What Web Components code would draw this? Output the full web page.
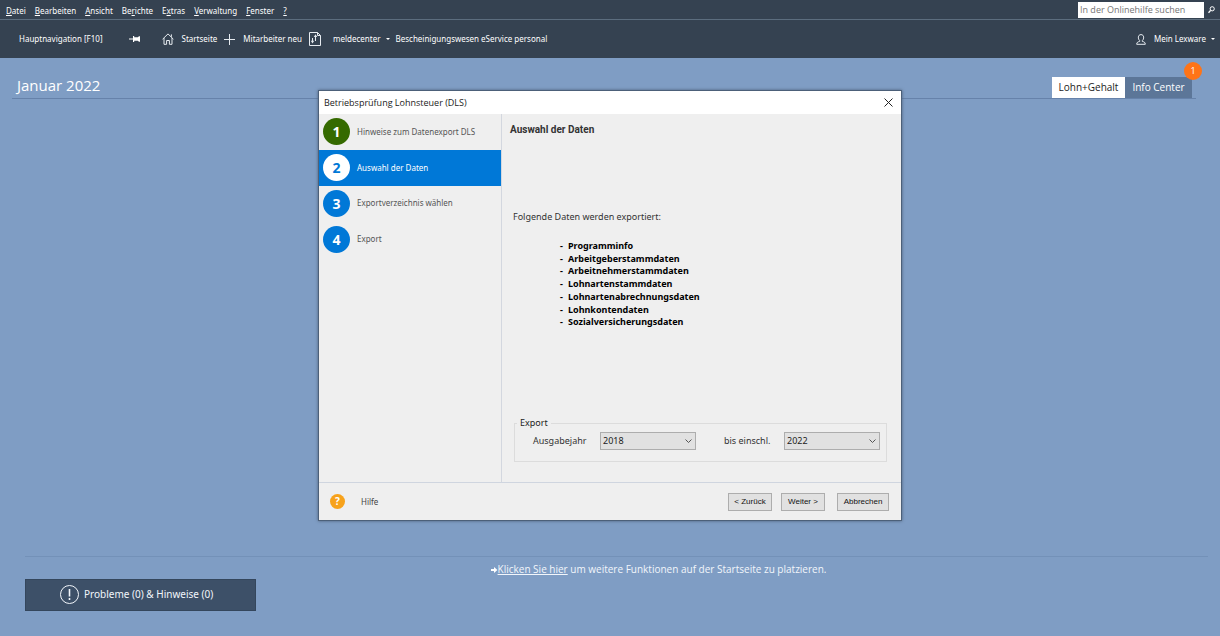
<!DOCTYPE html>
<html lang="de">
<head>
<meta charset="utf-8">
<title>Lohn und Gehalt</title>
<style>
html, body { margin: 0; height: 100%; }
body { font: 8px/12px "Noto Sans", "Open Sans", sans-serif; background: #7f9dc4; }
</style>
</head>
<body>
<payroll-app></payroll-app>

<template id="t-app">
<style>
:host { display: flex; flex-direction: column; min-height: 100%; position: relative; color: #fff; }
main { flex: 1; display: flex; flex-direction: column; }
footer { margin-top: auto; padding: 0 12px 25px 25px; }
.hint { border-top: 1px solid #7391b8; padding: 6px 0 0 84px; margin: 0 0 3px; height: 13px; display: flex; justify-content: center; align-items: center; font: 10px/13px "Open Sans", sans-serif; color: #f2f6fb; white-space: pre; }
.hint a { color: inherit; text-underline-offset: 1px; }
.status { font: 10px/12px "Noto Sans", sans-serif; color: #f2f6fb; background: #3d5068; border: 1px solid #34465c; width: 231px; height: 32px; display: flex; align-items: center; padding: 0 0 2px 33px; gap: 4px; }
</style>
<app-menubar></app-menubar>
<app-toolbar></app-toolbar>
<main>
  <page-header></page-header>
  <footer>
    <p class="hint"><svg width="7" height="6" viewBox="0 0 7 6"><path d="M0 2h3V0l3.400 3L3 6V4H0z" fill="#fff"/></svg><a href="#">Klicken Sie hier</a> um weitere Funktionen auf der Startseite zu platzieren.</p>
    <button class="status"><svg width="21" height="21" viewBox="0 0 21 21" fill="none" stroke="#f2f6fb"><circle cx="10.500" cy="10.500" r="9"/><path d="M10.500 5v7.500M10.500 14v2" stroke-width="1.600"/></svg>Probleme (0) &amp; Hinweise (0)</button>
  </footer>
</main>
<export-dialog></export-dialog>
</template>

<template id="t-menubar">
<style>
:host { display: flex; align-items: center; height: 19px; background: #354251; border-bottom: 1px solid #5c6d7e; padding: 0 5px 0 6px; }
nav { display: flex; gap: 9px; padding-top: 2px; }
a { color: #fff; text-decoration: none; }
u { text-underline-offset: 1px; }
form { margin: 0 0 0 auto; display: flex; align-items: center; gap: 4px; }
input { box-sizing: border-box; width: 126px; height: 16px; border: 0; border-radius: 0; padding: 0 2px; background: #fff; color: #333; font: 9px/14px "Open Sans", sans-serif; }
input::placeholder { color: #757575; opacity: 1; }
button { display: flex; border: 0; padding: 0; background: none; }
</style>
<nav>
<a href="#"><u>D</u>atei</a><a href="#"><u>B</u>earbeiten</a><a href="#"><u>A</u>nsicht</a><a href="#">Be<u>r</u>ichte</a><a href="#">E<u>x</u>tras</a><a href="#"><u>V</u>erwaltung</a><a href="#"><u>F</u>enster</a><a href="#"><u>?</u></a>
</nav>
<form>
<input type="text" placeholder="In der Onlinehilfe suchen" aria-label="Onlinehilfe">
<button type="button" aria-label="Suchen"><svg width="7" height="8" viewBox="0 0 7 8" fill="none" stroke="#fff"><circle cx="4.200" cy="2.800" r="2.100"/><path d="M2.600 4.400L.5 6.800" stroke-width="1.400"/></svg></button>
</form>
</template>

<template id="t-toolbar">
<style>
:host { display: flex; align-items: center; height: 38px; background: #354251; padding: 0 5px 0 19px; white-space: nowrap; }
a, button { display: flex; align-items: center; color: #fff; text-decoration: none; font: inherit; background: none; border: 0; padding: 0; }
.pin { margin: 0 22px 0 26px; }
.home { margin-right: 7px; }
.new { margin-right: 7px; }
.report { margin-right: 6px; }
.home svg, .new svg, .account svg { margin-right: 8px; }
.report svg { margin-right: 12px; }
.drop::after { content: ""; border: 2px solid transparent; border-top-color: #fff; border-bottom: 0; margin-left: 5px; }
.cert { margin-right: 2px; }
.account { margin-left: auto; }
</style>
<a href="#">Hauptnavigation [F10]</a>
<button class="pin" aria-label="Anheften"><svg width="11" height="6" viewBox="0 0 11 6" fill="#fff"><path d="M0 2.500h4v1H0zM4 0h1.200v1.200h3.600L10 .3h1v5.400h-1l-1.200-.9H5.200V6H4z"/></svg></button>
<a class="home" href="#"><svg width="12" height="12" viewBox="0 0 12 12" fill="none" stroke="#e6ebf0"><path d="M.6 6.200L6 .9l5.400 5.300M2 5v6.300h2.600V7.500h2.800v3.800H10V5M9.400 3.800V1.400"/></svg>Startseite</a>
<a class="new" href="#"><svg width="11" height="11" viewBox="0 0 11 11" stroke="#e6ebf0"><path d="M5.500 0v11M0 5.500h11"/></svg>Mitarbeiter neu</a>
<a class="report drop" href="#"><svg width="12" height="14" viewBox="0 0 12 14" fill="none" stroke="#e6ebf0"><path d="M.5.5h8l3 3v10H.5zM8.500.5v3h3"/><path d="M3.500 10V6M6.500 4v5" /><path d="M1.800 8.800h3.400L3.500 11.500zM4.800 5h3.400L6.500 2.300z" fill="#e6ebf0" stroke="none"/></svg>meldecenter</a>
<a class="cert" href="#">Bescheinigungswesen</a>
<a href="#">eService personal</a>
<a class="account drop" href="#"><svg width="10" height="11" viewBox="0 0 10 11" fill="none" stroke="#e6ebf0"><path d="M5 .6c3.400 0 3.200 4.600 1.300 6v.8c1.500.3 3 .8 3 2.900H.7c0-2.100 1.500-2.600 3-2.900v-.8C1.800 5.200 1.600.6 5 .6z"/></svg>Mein Lexware</a>
</template>

<template id="t-header">
<style>
:host { display: flex; align-items: flex-end; justify-content: space-between; margin: 0 24px 0 12px; height: 40px; border-bottom: 1px solid #6682aa; color: #fff; }
h1 { margin: 0 0 3px; padding-left: 5px; font: 400 15px/20px "Open Sans", sans-serif; }
nav { display: flex; margin-right: 4px; }
a { position: relative; box-sizing: border-box; height: 21px; width: 67px; font: 10px/21px "Open Sans", sans-serif; text-align: center; text-decoration: none; color: #fff; background: #5c7698; }
a.on { background: #fff; color: #222; width: 73px; }
.badge { position: absolute; right: -10px; top: -15px; width: 18px; height: 18px; border-radius: 50%; background: #ff7417; font-size: 9px; line-height: 18px; }
</style>
<h1>Januar 2022</h1>
<nav><a class="on" href="#">Lohn+Gehalt</a><a href="#">Info Center<span class="badge">1</span></a></nav>
</template>

<template id="t-step">
<style>
:host { display: flex; align-items: center; gap: 7px; padding-left: 4px; color: #555; --disc: #0078d7; --num: #fff; }
:host([state="done"]) { --disc: #356a00; }
:host([state="current"]) { --disc: #fff; --num: #0078d7; background: #0078d7; color: #fff; }
b { width: 27px; height: 27px; border-radius: 50%; background: var(--disc); color: var(--num); text-align: center; font-size: 14px; line-height: 27px; }
</style>
<b></b><span><slot></slot></span>
</template>

<template id="t-dialog">
<style>
:host { position: absolute; top: 90px; left: 0; right: 0; margin: 0 auto; box-sizing: border-box; width: 584px; border: 1px solid #4c6079; background: #efefef; color: #333; box-shadow: 0 0 3px #4c6079; }
header { display: flex; justify-content: space-between; align-items: center; height: 23px; background: #fff; padding: 0 8px 0 5px; color: #222; font: 9px/12px "Open Sans", sans-serif; }
header button { display: flex; border: 0; background: none; padding: 0; }
.body { display: grid; grid-template-columns: 183px 1fr; height: 368px; }
aside { border-right: 1px solid #d3d7df; }
.steps { display: grid; grid-template-rows: repeat(4, 1fr); height: 143px; }
section { padding: 9px 14px 0 8px; display: flex; flex-direction: column; }
h2 { margin: 0; font: bold 10px/13px Roboto, sans-serif; color: #333; }
p { margin: 74px 0 0 3px; font-size: 9px; line-height: 13px; color: #333; }
ul { list-style: none; margin: 17px 0 0 50px; padding: 0; height: 89px; display: grid; grid-template-rows: repeat(7, 1fr); font-size: 9px; line-height: 12px; font-weight: 700; color: #000; }
li { display: flex; }
li::before { content: "-"; width: 8px; }
fieldset { margin: auto 0 20px 4px; border: 1px solid #dcdcdc; padding: 3px 6px 11px 18px; display: grid; grid-template-columns: 67px 96px 28px 60px 96px; align-items: center; min-width: 0; font-size: 9px; line-height: 12px; }
legend { padding: 0 3px; margin-left: -16px; color: #222; }
.second { grid-column: 4; }
select { appearance: none; box-sizing: border-box; width: 96px; height: 18px; margin: 0; padding: 0 14px 0 2px; border: 1px solid #adadad; border-radius: 0; color: #222; font: 9px/14px "Noto Sans", sans-serif; background: #e1e1e1 url("data:image/svg+xml,%3Csvg xmlns='http://www.w3.org/2000/svg' width='7' height='4' fill='none' stroke='%23555'%3E%3Cpath d='M.5.5l3 3 3-3'/%3E%3C/svg%3E") no-repeat right 3px center; }
footer { display: flex; align-items: center; border-top: 1px solid #cfd5df; height: 37px; padding: 0 12px 0 11px; }
.help { display: flex; align-items: center; gap: 16px; color: #444; text-decoration: none; margin-right: auto; }
.help b { width: 15px; height: 15px; border-radius: 50%; background: #f7a21b; color: #fff; text-align: center; font-size: 10px; line-height: 15px; }
footer button { box-sizing: border-box; height: 18px; border: 1px solid #adadad; background: #e1e1e1; color: #111; font: 8px/14px "Liberation Sans", Arial, sans-serif; padding: 0; width: 44px; margin-left: 9px; white-space: nowrap; }
footer .cancel { width: 52px; margin-left: 12px; }
</style>
<header><span>Betriebsprüfung Lohnsteuer (DLS)</span><button aria-label="Schließen"><svg width="9" height="9" viewBox="0 0 9 9" stroke="#222"><path d="M.5.5l8 8M8.500.5l-8 8"/></svg></button></header>
<div class="body">
  <aside>
    <div class="steps">
      <wizard-step number="1" state="done">Hinweise zum Datenexport DLS</wizard-step>
      <wizard-step number="2" state="current">Auswahl der Daten</wizard-step>
      <wizard-step number="3">Exportverzeichnis wählen</wizard-step>
      <wizard-step number="4">Export</wizard-step>
    </div>
  </aside>
  <section>
    <h2>Auswahl der Daten</h2>
    <p>Folgende Daten werden exportiert:</p>
    <ul><li>Programminfo</li><li>Arbeitgeberstammdaten</li><li>Arbeitnehmerstammdaten</li><li>Lohnartenstammdaten</li><li>Lohnartenabrechnungsdaten</li><li>Lohnkontendaten</li><li>Sozialversicherungsdaten</li></ul>
    <fieldset>
      <legend>Export</legend>
      <label for="from">Ausgabejahr</label>
      <select id="from"><option>2018</option><option>2019</option><option>2020</option><option>2021</option><option>2022</option></select>
      <label class="second" for="to">bis einschl.</label>
      <select id="to"><option>2022</option><option>2021</option><option>2020</option><option>2019</option><option>2018</option></select>
    </fieldset>
  </section>
</div>
<footer><a class="help" href="#"><b>?</b>Hilfe</a><button>&lt; Zurück</button><button>Weiter &gt;</button><button class="cancel">Abbrechen</button></footer>
</template>

<script>
class TemplateElement extends HTMLElement {
  constructor() {
    super();
    const template = document.getElementById(this.constructor.template);
    this.attachShadow({ mode: "open" }).append(template.content.cloneNode(true));
  }
}
class WizardStep extends TemplateElement {
  static template = "t-step";
  connectedCallback() {
    this.shadowRoot.querySelector("b").textContent = this.getAttribute("number");
  }
}
class AppMenubar extends TemplateElement { static template = "t-menubar"; }
class AppToolbar extends TemplateElement { static template = "t-toolbar"; }
class PageHeader extends TemplateElement { static template = "t-header"; }
class ExportDialog extends TemplateElement { static template = "t-dialog"; }
class PayrollApp extends TemplateElement { static template = "t-app"; }
customElements.define("wizard-step", WizardStep);
customElements.define("app-menubar", AppMenubar);
customElements.define("app-toolbar", AppToolbar);
customElements.define("page-header", PageHeader);
customElements.define("export-dialog", ExportDialog);
customElements.define("payroll-app", PayrollApp);
</script>
</body>
</html>
